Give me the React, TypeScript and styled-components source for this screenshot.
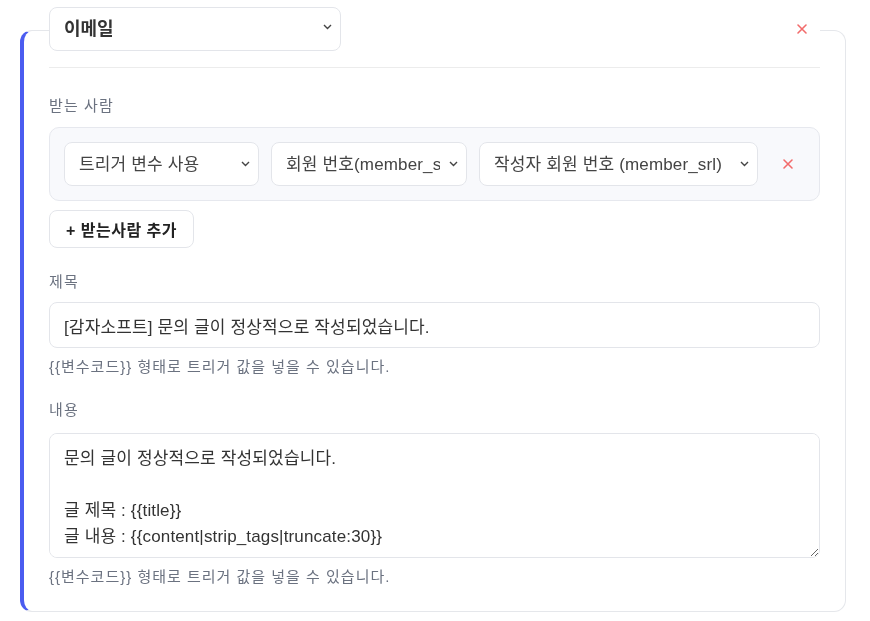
import { useState } from "react";
import styled, { createGlobalStyle } from "styled-components";

const GlobalStyle = createGlobalStyle`
body {
  margin: 0;
  background: #ffffff;
  font-family: "Liberation Sans", "Noto Sans CJK KR", sans-serif;
  color: #333;
}
* { box-sizing: border-box; }
`;

const Page = styled.div`
padding: 30px 0 0 20px;
`;

const Card = styled.div`
width: 826px;
background: #fff;
border: 1px solid #e5e7eb;
border-left: 4px solid #4b5cf0;
border-radius: 12px;
padding: 0 25px 24px 25px;
`;

const Header = styled.div`
margin-top: -24px;
background: #fff;
display: flex;
align-items: center;
justify-content: space-between;
padding-bottom: 16px;
border-bottom: 1px solid #ececec;
`;

const SelectWrap = styled.div<{ w?: string }>`
position: relative;
width: ${p => p.w || "100%"};
min-width: 0;
`;

const Select = styled.select<{ strong?: boolean }>`
appearance: none;
width: 100%;
height: 44px;
border: 1px solid #e3e5ea;
border-radius: 8px;
background: #fff;
padding: 0 26px 0 14px;
font-family: inherit;
font-size: ${p => p.strong ? "18px" : "17px"};
letter-spacing: ${p => p.strong ? "0" : "0.15px"};
font-weight: ${p => p.strong ? 700 : 400};
color: ${p => p.strong ? "#333" : "#444"};
outline: none;
`;

const Chevron = styled.svg<{ lift?: number }>`
position: absolute;
right: 9px;
top: 50%;
margin-top: ${p => -3 - (p.lift || 0)}px;
pointer-events: none;
`;

const RemoveButton = styled.button<{ w: number }>`
width: ${p => p.w}px;
height: 28px;
border: none;
background: transparent;
display: flex;
align-items: center;
justify-content: center;
padding: 0;
cursor: pointer;
`;

const Field = styled.div<{ top: number }>`
margin-top: ${p => p.top}px;
`;

const Label = styled.div<{ gap: number }>`
font-size: 15px;
letter-spacing: 1.1px;
line-height: 22px;
color: #6b7280;
margin-bottom: ${p => p.gap}px;
`;

const RecipientBox = styled.div`
background: #f8f9fc;
border: 1px solid #e6e8ee;
border-radius: 10px;
padding: 14px 13px 14px 14px;
display: grid;
grid-template-columns: 195px 196px 1fr 36px;
gap: 12px;
align-items: center;
`;

const AddButton = styled.button`
margin-top: 9px;
height: 38px;
padding: 0 16px;
border: 1px solid #e3e5ea;
border-radius: 8px;
background: #fff;
font-family: inherit;
font-size: 16px;
letter-spacing: 0.5px;
font-weight: 700;
color: #222;
cursor: pointer;
`;

const TextInput = styled.input`
width: 100%;
height: 46px;
border: 1px solid #e3e5ea;
border-radius: 8px;
padding: 0 14px;
font-family: inherit;
font-size: 17px;
letter-spacing: 0.15px;
color: #333;
outline: none;
`;

const TextArea = styled.textarea`
display: block;
width: 100%;
height: 125px;
border: 1px solid #e3e5ea;
border-radius: 8px;
padding: 12px 14px 8px;
font-family: inherit;
font-size: 17px;
letter-spacing: 0.15px;
line-height: 26px;
color: #333;
resize: vertical;
outline: none;
`;

const Hint = styled.div`
margin-top: 9px;
font-size: 15px;
letter-spacing: 1px;
line-height: 20px;
color: #6b7280;
`;

function Arrow({ lift }: { lift?: number }) {
  return (
    <Chevron lift={lift} width="9" height="6" viewBox="0 0 9 6">
      <path d="M1 1 L4.5 4.5 L8 1" fill="none" stroke="#444" strokeWidth="1.4" />
    </Chevron>
  );
}

function Cross() {
  return (
    <svg width="12" height="12" viewBox="0 0 12 12">
      <path d="M2 2 L10 10 M10 2 L2 10" stroke="#f26b6b" strokeWidth="1.6" strokeLinecap="round" />
    </svg>
  );
}

const hint = "{{변수코드}} 형태로 트리거 값을 넣을 수 있습니다.";

export default function App() {
  const [channel, setChannel] = useState("email");
  const [title, setTitle] = useState("[감자소프트] 문의 글이 정상적으로 작성되었습니다.");
  const [body, setBody] = useState(
    "문의 글이 정상적으로 작성되었습니다.\n\n글 제목 : {{title}}\n글 내용 : {{content|strip_tags|truncate:30}}"
  );

  return (
    <Page>
      <GlobalStyle />
      <Card>
        <Header>
          <SelectWrap w="292px">
            <Select strong value={channel} onChange={e => setChannel(e.target.value)}>
              <option value="email">이메일</option>
              <option value="sms">문자</option>
            </Select>
            <Arrow lift={2} />
          </SelectWrap>
          <RemoveButton w={36}>
            <Cross />
          </RemoveButton>
        </Header>

        <Field top={27}>
          <Label gap={10}>받는 사람</Label>
          <RecipientBox>
            <SelectWrap>
              <Select defaultValue="var">
                <option value="var">트리거 변수 사용</option>
              </Select>
              <Arrow />
            </SelectWrap>
            <SelectWrap>
              <Select defaultValue="member">
                <option value="member">회원 번호(member_srl)</option>
              </Select>
              <Arrow />
            </SelectWrap>
            <SelectWrap>
              <Select defaultValue="author">
                <option value="author">작성자 회원 번호 (member_srl)</option>
              </Select>
              <Arrow />
            </SelectWrap>
            <RemoveButton w={36}>
              <Cross />
            </RemoveButton>
          </RecipientBox>
          <AddButton>+ 받는사람 추가</AddButton>
        </Field>

        <Field top={23}>
          <Label gap={9}>제목</Label>
          <TextInput value={title} onChange={e => setTitle(e.target.value)} />
          <Hint>{hint}</Hint>
        </Field>

        <Field top={22}>
          <Label gap={12}>내용</Label>
          <TextArea value={body} onChange={e => setBody(e.target.value)} />
          <Hint>{hint}</Hint>
        </Field>
      </Card>
    </Page>
  );
}
